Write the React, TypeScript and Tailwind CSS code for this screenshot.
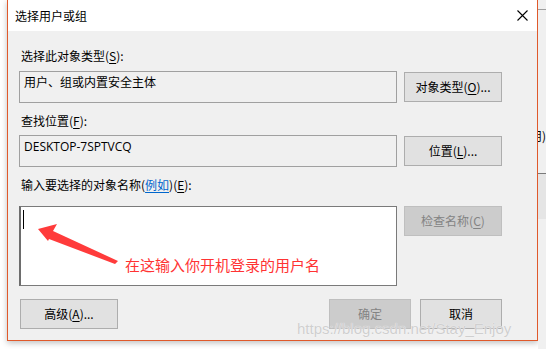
import React from "react";

const ui = { fontFamily: '"Noto Sans CJK SC", "Noto Sans", sans-serif' };

function Btn({ children, disabled, w = "w-[98px]" }: { children: React.ReactNode; disabled?: boolean; w?: string }) {
  return (
    <div
      className={`${w} h-[30px] flex items-center justify-center text-[12px] border ${
        disabled ? "bg-[#cccccc] border-[#bfbfbf] text-[#838383]" : "bg-[#e1e1e1] border-[#adadad] text-black"
      }`}
    >
      {children}
    </div>
  );
}

function U({ children }: { children: React.ReactNode }) {
  return <span className="underline underline-offset-2">{children}</span>;
}

export default function App() {
  return (
    <div className="w-[546px] h-[349px] bg-white overflow-hidden flex" style={ui}>
      <div className="w-[7px] shrink-0 flex flex-col">
        <div className="flex-1 bg-white" />
      </div>
      <div className="w-[531px] h-[341px] shrink-0 flex flex-col border-l border-r border-b border-[#e0592b] bg-[#f0f0f0] shadow-[0_2px_6px_rgba(0,0,0,0.25)]">
        <div className="h-[31px] bg-white flex items-center justify-between pl-[7px] pr-[9px] shrink-0">
          <span className="text-[12px] text-black">选择用户或组</span>
          <svg width="11" height="11" viewBox="0 0 11 11">
            <path d="M0.5 0.5 L10.5 10.5 M10.5 0.5 L0.5 10.5" stroke="#000" strokeWidth="1.1" />
          </svg>
        </div>
        <div className="flex flex-col pl-[11px] pr-[35px] pt-[17px]">
          <div className="h-[16px] leading-[16px] text-[12px] pl-[2px]">
            选择此对象类型(<U>S</U>):
          </div>
          <div className="flex justify-between mt-[7px]">
            <div className="w-[378px] h-[32px] border border-[#a0a0a0] bg-[#f0f0f0] text-[12px] pl-[4px] pt-[2px] leading-[16px]">
              用户、组或内置安全主体
            </div>
            <div className="mt-[1px]">
              <Btn>对象类型(<U>O</U>)...</Btn>
            </div>
          </div>
          <div className="h-[16px] leading-[16px] text-[12px] pl-[2px] mt-[10px]">
            查找位置(<U>F</U>):
          </div>
          <div className="flex justify-between mt-[6px]">
            <div className="w-[378px] h-[32px] border border-[#a0a0a0] bg-[#f0f0f0] text-[12px] pl-[4px] pt-[3px] leading-[16px]" style={{ fontFamily: '"Open Sans", "Noto Sans", sans-serif', fontSize: "12px" }}>
              DESKTOP-7SPTVCQ
            </div>
            <div className="mt-[1px]">
              <Btn>位置(<U>L</U>)...</Btn>
            </div>
          </div>
          <div className="h-[16px] leading-[16px] text-[12px] pl-[2px] mt-[10px]">
            输入要选择的对象名称(<span className="text-[#0066cc] underline underline-offset-2">例如</span>)(<U>E</U>):
          </div>
          <div className="flex justify-between mt-[13px]">
            <div className="relative w-[378px] h-[80px] border border-[#7a7a7a] border-l-[2px] border-l-[#6d6d6d] bg-white">
              <div className="absolute left-[2px] top-[3px] w-[1px] h-[19px] bg-black" />
              <svg className="absolute left-0 top-0" width="378" height="80" viewBox="0 0 378 80">
                <polygon points="17,22 36,17 32,24 97,54 94,57 28,32 27,34" fill="#ff3b3b" />
              </svg>
              <div className="absolute left-[104px] top-[48px] text-[15px] leading-[20px] text-[#ff3333]">
                在这输入你开机登录的用户名
              </div>
            </div>
            <div>
              <Btn disabled>检查名称(<U>C</U>)</Btn>
            </div>
          </div>
          <div className="flex justify-between mt-[13px] pl-[1px]">
            <Btn>高级(<U>A</U>)...</Btn>
            <div className="flex gap-[9px]">
              <Btn disabled w="w-[82px]">确定</Btn>
              <Btn w="w-[82px]">取消</Btn>
            </div>
          </div>
        </div>
        <div className="relative flex-1">
          <div
            className="absolute left-[289px] top-[-9px] text-[15px] leading-[18px] text-[#cfcfcf] whitespace-nowrap"
            style={{ fontFamily: '"Liberation Sans", Arial, sans-serif', textShadow: "0 0 1px #ffffff" }}
          >
            https://blog.csdn.net/Stay_Enjoy
          </div>
        </div>
      </div>
      <div className="flex-1 bg-[#f0f0f0] flex flex-col overflow-hidden">
        <div className="h-[10px] border-b border-[#a0a0a0]" />
        <div className="h-[118px]" />
        <div className="flex justify-end overflow-hidden">
          <span className="text-[12px] leading-[16px] whitespace-nowrap shrink-0">用)</span>
        </div>
        <div className="h-[30px] border-b border-[#7a7a7a]" />
        <div className="h-[45px] bg-[#e5e5e5]" />
      </div>
    </div>
  );
}
